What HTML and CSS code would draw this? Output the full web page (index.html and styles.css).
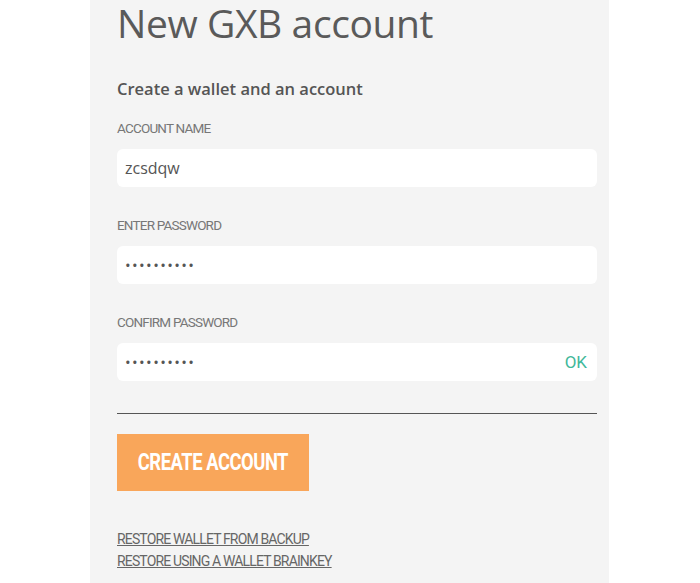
FILE: index.html
```html
<!DOCTYPE html>
<html>
<head>
<meta charset="utf-8">
<link rel="stylesheet" href="styles.css">
</head>
<body>
<div class="page">
  <div class="panel">
    <h1 class="title">New GXB account</h1>
    <h2 class="subtitle">Create a wallet and an account</h2>
    <div class="field">
      <label class="label">ACCOUNT NAME</label>
      <div class="input"><span class="value">zcsdqw</span></div>
    </div>
    <div class="field">
      <label class="label">ENTER PASSWORD</label>
      <div class="input"><span class="dots">••••••••••</span></div>
    </div>
    <div class="field">
      <label class="label">CONFIRM PASSWORD</label>
      <div class="input"><span class="dots">••••••••••</span><span class="ok">OK</span></div>
    </div>
    <hr class="divider">
    <button class="btn"><span class="btn-text">CREATE ACCOUNT</span></button>
    <div class="links">
      <a class="link">RESTORE WALLET FROM BACKUP</a>
      <a class="link">RESTORE USING A WALLET BRAINKEY</a>
    </div>
  </div>
</div>
</body>
</html>
```
FILE: styles.css
```css
html, body { margin: 0; padding: 0; background: #fff; }
.page { display: flex; padding-left: 90px; height: 583px; overflow: hidden; }
.panel {
  width: 519px;
  box-sizing: border-box;
  padding: 0 12px 0 27px;
  background: #f4f4f4;
  display: flex;
  flex-direction: column;
}
.title {
  margin: 0;
  padding-top: 1px;
  font-family: "Open Sans", sans-serif;
  font-weight: 400;
  font-size: 39px;
  line-height: 43px;
  color: #5a5a5a;
  letter-spacing: -0.4px;
}
.subtitle {
  margin: 35px 0 0;
  font-family: "Open Sans", sans-serif;
  font-weight: 600;
  font-size: 16.5px;
  line-height: 20px;
  color: #555;
}
.field { display: flex; flex-direction: column; }
.label {
  margin-top: 21px;
  font-family: Roboto, sans-serif;
  font-size: 13.5px;
  line-height: 16px;
  color: #777;
  letter-spacing: -0.8px;
}
.field + .field .label { margin-top: 30px; }
.input {
  margin-top: 13px;
  height: 38px;
  background: #fff;
  border-radius: 6px;
  display: flex;
  align-items: center;
  justify-content: space-between;
  padding: 0 10px 0 8px;
}
.value {
  font-family: "Open Sans", sans-serif;
  font-size: 16px;
  color: #555;
}
.dots {
  font-family: "Open Sans", sans-serif;
  font-size: 15px;
  color: #555;
  letter-spacing: 1.4px;
}
.ok {
  font-family: Roboto, sans-serif;
  font-size: 17px;
  color: #3fb89a;
}
.divider {
  margin: 32px 0 0;
  border: 0;
  border-top: 1px solid #555;
  height: 0;
}
.btn {
  margin-top: 20px;
  align-self: flex-start;
  width: 192px;
  height: 57px;
  border: 0;
  background: #f9a65a;
  color: #fff;
  padding: 0;
  display: flex;
  align-items: center;
  justify-content: center;
}
.btn-text {
  display: inline-block;
  font-family: Roboto, sans-serif;
  font-weight: 700;
  font-size: 23px;
  letter-spacing: -0.6px;
  transform: scaleX(0.8);
  white-space: nowrap;
}
.links {
  margin-top: 40px;
  display: flex;
  flex-direction: column;
  gap: 6px;
}
.link {
  font-family: Roboto, sans-serif;
  font-size: 14px;
  line-height: 16px;
  color: #666;
  text-decoration: underline;
  letter-spacing: -0.85px;
}
```
